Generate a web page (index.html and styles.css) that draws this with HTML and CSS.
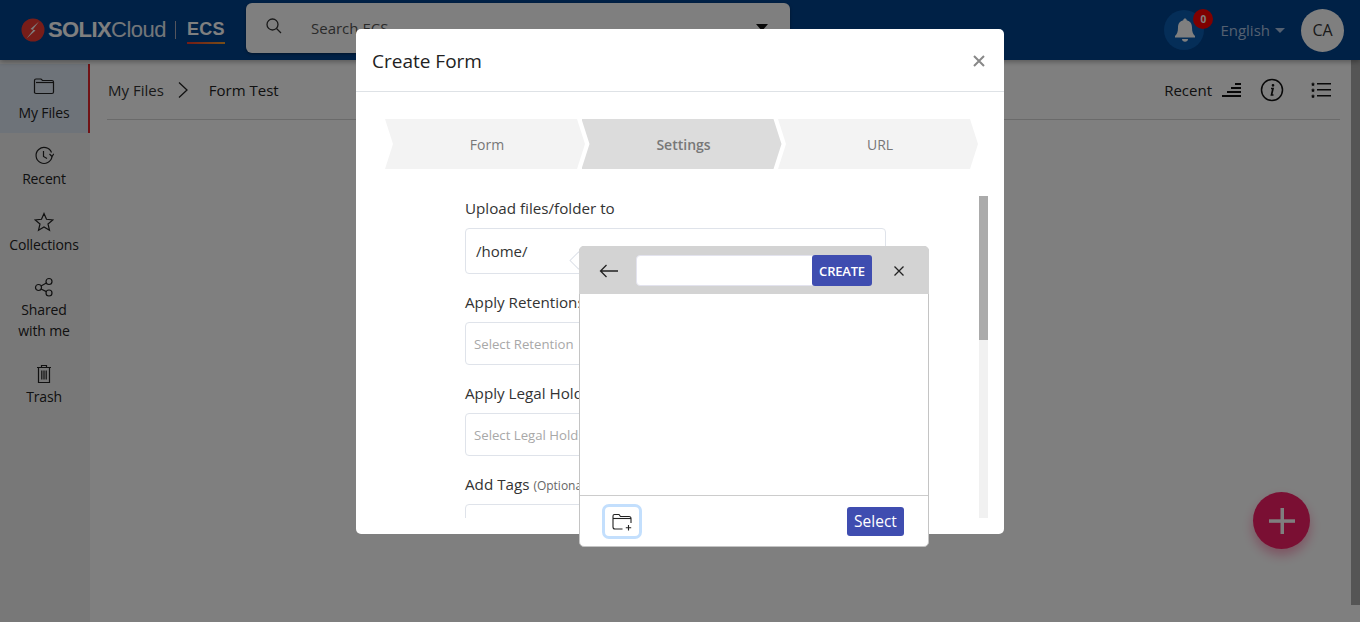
FILE: index.html
```html
<!DOCTYPE html>
<html lang="en">
<head>
    <meta charset="UTF-8">
    <title>My Files</title>
    <link rel="stylesheet" href="styles.css">
</head>
<body>
    <header class="topbar">
        <div class="logo">
            <svg class="logo-mark" width="24" height="24" viewBox="0 0 24 24">
                <circle cx="12" cy="12" r="11.5" fill="#ef3b32"/>
                <path d="M18 3.500 L9.500 11 L12.300 12 L5.500 20.500 L14.500 12.500 L11.800 11.500 Z" fill="#fff"/>
            </svg>
            <span class="logo-solix">SOLIX</span><span class="logo-cloud">Cloud</span>
            <span class="logo-sep"></span>
            <span class="logo-ecs">ECS</span>
        </div>
        <div class="search">
            <svg width="18" height="18" viewBox="0 0 18 18" fill="none" stroke="#333" stroke-width="1.3">
                <circle cx="7.5" cy="7.5" r="5.5"/>
                <path d="M11.5 11.5 L16 16"/>
            </svg>
            <span class="search-text">Search ECS</span>
            <span class="search-caret"></span>
        </div>
        <div class="top-right">
            <div class="bell">
                <svg width="24" height="26" viewBox="0 0 24 26" fill="#fff">
                    <path d="M12 1.5 c1 0 1.7 .7 1.7 1.7 c3.6 .8 5.3 3.6 5.3 7.3 c0 4.5 1 6.5 3 8.5 v1.5 H2 V19 c2 -2 3 -4 3 -8.5 c0 -3.700 1.700 -6.500 5.300 -7.300 C10.300 2.200 11 1.500 12 1.500 Z"/>
                    <path d="M9 22 h6 c0 1.700 -1.300 2.700 -3 2.700 s-3 -1 -3 -2.700 Z"/>
                </svg>
                <span class="bell-count">0</span>
            </div>
            <span class="lang">English</span>
            <span class="lang-caret"></span>
            <span class="avatar">CA</span>
        </div>
    </header>

    <div class="main">
        <nav class="sidebar">
            <a class="side-item active">
                <svg width="22" height="18" viewBox="0 0 22 18" fill="none" stroke="#222" stroke-width="1.200">
                    <path d="M1.500 16 V3.500 Q1.500 2 3 2 H8 L9.500 3.500 H19 Q20.500 3.500 20.500 5 V15 Q20.500 16.500 19 16.500 H3 Q1.500 16.500 1.500 15"/>
                    <path d="M3 5.500 H20"/>
                </svg>
                <span>My Files</span>
            </a>
            <a class="side-item">
                <svg width="20" height="20" viewBox="0 0 20 20" fill="none" stroke="#222" stroke-width="1.200">
                    <path d="M17.500 6.500 A8 8 0 1 0 18 10.500"/>
                    <path d="M15.500 8 L18 10.500 L19.800 7.800"/>
                    <path d="M9.500 5 V10.500 L13 12.500"/>
                </svg>
                <span>Recent</span>
            </a>
            <a class="side-item">
                <svg width="20" height="20" viewBox="0 0 20 20" fill="none" stroke="#222" stroke-width="1.200">
                    <path d="M10 1.500 L12.500 7.300 L18.800 7.900 L14 12 L15.500 18.300 L10 15 L4.500 18.300 L6 12 L1.200 7.900 L7.500 7.300 Z"/>
                </svg>
                <span>Collections</span>
            </a>
            <a class="side-item">
                <svg width="20" height="20" viewBox="0 0 20 20" fill="none" stroke="#222" stroke-width="1.200">
                    <circle cx="4.500" cy="10.500" r="3"/>
                    <circle cx="15" cy="4.500" r="3"/>
                    <circle cx="15" cy="16" r="3"/>
                    <path d="M7 9 L12.400 6 M7 12 L12.400 14.600"/>
                </svg>
                <span>Shared<br>with me</span>
            </a>
            <a class="side-item">
                <svg width="18" height="20" viewBox="0 0 18 20" fill="none" stroke="#222" stroke-width="1.200">
                    <path d="M2 3.500 H16 M6.500 3.500 V1.500 H11.500 V3.500"/>
                    <path d="M3.500 3.500 V18.500 H14.500 V3.500"/>
                    <path d="M6.800 6.500 V15.500 M9 6.500 V15.500 M11.200 6.500 V15.500"/>
                </svg>
                <span>Trash</span>
            </a>
        </nav>

        <section class="content">
            <div class="crumbs">
                <span class="crumb">My Files</span>
                <svg width="12" height="18" viewBox="0 0 12 18" fill="none" stroke="#222" stroke-width="1.300">
                    <path d="M2 1.500 L10 9 L2 16.500"/>
                </svg>
                <span class="crumb-current">Form Test</span>
                <div class="tools">
                    <span class="crumb-current">Recent</span>
                    <svg class="tool-sort" width="19" height="14" viewBox="0 0 19 14" fill="#111">
                        <rect x="13" y="0" width="6" height="2"/>
                        <rect x="9" y="4" width="10" height="2"/>
                        <rect x="5" y="8" width="14" height="2"/>
                        <rect x="0" y="12" width="19" height="2"/>
                    </svg>
                    <svg class="tool-info" width="24" height="24" viewBox="0 0 24 24" fill="none" stroke="#111" stroke-width="1.500">
                        <circle cx="12" cy="12" r="10.500"/>
                        <path d="M11 10.500 H13 L11.500 17 H13.500" stroke-width="1.700"/>
                        <circle cx="13" cy="7.300" r=".6" fill="#111"/>
                    </svg>
                    <svg class="tool-list" width="20" height="16" viewBox="0 0 20 16" fill="#111">
                        <path d="M2 0 l.7 1.500 1.300 .2 -1 1 .3 1.500 -1.300 -.7 -1.300 .7 .3 -1.500 -1 -1 1.300 -.2 Z"/>
                        <path d="M2 6 l.7 1.500 1.300 .2 -1 1 .3 1.500 -1.300 -.7 -1.300 .7 .3 -1.500 -1 -1 1.300 -.2 Z"/>
                        <path d="M2 12 l.7 1.500 1.300 .2 -1 1 .3 1.500 -1.300 -.7 -1.300 .7 .3 -1.500 -1 -1 1.300 -.2 Z"/>
                        <rect x="6" y="1" width="14" height="1.500"/>
                        <rect x="6" y="7" width="14" height="1.500"/>
                        <rect x="6" y="13" width="14" height="1.500"/>
                    </svg>
                </div>
            </div>
            <span class="fab">
                <svg width="26" height="26" viewBox="0 0 26 26" fill="#fff">
                    <rect x="11.500" y="0" width="3.500" height="26"/>
                    <rect x="0" y="11.300" width="26" height="3.500"/>
                </svg>
            </span>
        </section>

        <div class="page-scroll"></div>
    </div>

    <div class="backdrop"></div>

    <div class="overlay">
        <div class="modal">
            <div class="modal-head">
                <h2>Create Form</h2>
                <svg width="12" height="12" viewBox="0 0 12 12" stroke="#888" stroke-width="2">
                    <path d="M1 1 L11 11 M11 1 L1 11"/>
                </svg>
            </div>
            <div class="modal-body">
                <div class="modal-scroll">
                    <div class="steps">
                        <div class="step">Form</div>
                        <div class="step current">Settings</div>
                        <div class="step">URL</div>
                    </div>
                    <form class="form">
                        <label>Upload files/folder to</label>
                        <div class="field path">/home/</div>
                        <label>Apply Retentions</label>
                        <div class="field">Select Retention</div>
                        <label>Apply Legal Holds</label>
                        <div class="field">Select Legal Holds</div>
                        <label>Add Tags <small>(Optional)</small></label>
                        <div class="field"></div>
                    </form>
                </div>
                <div class="modal-bar"><div class="modal-thumb"></div></div>
            </div>

            <div class="picker">
                <span class="picker-arrow"></span>
                <div class="picker-head">
                    <svg class="picker-back" width="20" height="14" viewBox="0 0 20 14" fill="none" stroke="#222" stroke-width="1.300">
                        <path d="M19 7 H1.500 M7.500 1 L1.500 7 L7.500 13"/>
                    </svg>
                    <div class="picker-input">
                        <span class="picker-create">CREATE</span>
                    </div>
                    <svg class="picker-close" width="10" height="10" viewBox="0 0 10 10" stroke="#222" stroke-width="1.300">
                        <path d="M.5 .5 L9.500 9.500 M9.500 .5 L.5 9.500"/>
                    </svg>
                </div>
                <div class="picker-list"></div>
                <div class="picker-foot">
                    <span class="new-folder">
                        <svg width="21" height="18" viewBox="0 0 21 18" fill="none" stroke="#222" stroke-width="1.100">
                            <path d="M10.500 16 H3 Q1 16 1 14 V3 Q1 1.500 2.500 1.500 H7 L8.500 3.500 H17 Q19 3.500 19 5.500 V10"/>
                            <path d="M1 5.500 H19"/>
                            <path d="M16.500 12 V17.500 M13.800 14.800 H19.200"/>
                        </svg>
                    </span>
                    <span class="picker-select">Select</span>
                </div>
            </div>
        </div>
    </div>
</body>
</html>
```

FILE: styles.css
```css
/* General Style */
* {
    box-sizing: border-box;
}

body {
    font-family: 'Open Sans', 'Noto Sans', sans-serif;
    background-color: #fff;
    color: #222;
    margin: 0;
    height: 622px;
    overflow: hidden;
    position: relative;
}

/* Header */
.topbar {
    height: 60px;
    background-color: #00428c;
    display: flex;
    align-items: center;
    padding-left: 21px;
    box-shadow: 0 2px 5px rgba(0, 0, 0, 0.3);
    position: relative;
}

.logo {
    width: 225px;
    display: flex;
    align-items: center;
    height: 60px;
    color: #fff;
    font-family: 'Liberation Sans', sans-serif;
    font-size: 22px;
    padding-bottom: 1px;
}

.logo-mark {
    margin-right: 3px;
}

.logo-solix {
    font-weight: bold;
    letter-spacing: -0.6px;
}

.logo-cloud {
    letter-spacing: -0.5px;
    opacity: 0.9;
}

.logo-sep {
    width: 1px;
    height: 18px;
    background-color: #aab;
    margin: 0 11px 0 9px;
}

.logo-ecs {
    font-weight: bold;
    font-size: 18px;
    letter-spacing: 0.3px;
    padding-bottom: 2px;
    margin-top: 4px;
    border-bottom: 2px solid;
    border-image: linear-gradient(90deg, #e8352c, #f0a030) 1;
}

.search {
    width: 544px;
    height: 50px;
    margin-top: -5px;
    background-color: #fff;
    border-radius: 6px;
    display: flex;
    align-items: center;
    padding: 0 22px 0 19px;
    box-shadow: 0 1px 3px rgba(0, 0, 0, 0.4);
}

.search svg {
    margin-top: -4px;
}

.search-text {
    margin-left: 28px;
    font-size: 15px;
    color: #555;
    flex: 1;
}

.search-caret {
    border: 6px solid transparent;
    border-top: 7px solid #111;
    border-bottom: 0;
}

.top-right {
    margin-left: auto;
    display: flex;
    align-items: center;
    padding-right: 16px;
}

.bell {
    width: 40px;
    height: 40px;
    border-radius: 50%;
    background-color: #0a5cb0;
    display: flex;
    align-items: center;
    justify-content: center;
    position: relative;
}

.bell svg {
    margin-left: 1px;
}

.bell-count {
    position: absolute;
    top: -1px;
    left: 29px;
    width: 20px;
    height: 20px;
    border-radius: 50%;
    background-color: #ff0000;
    color: #fff;
    font-size: 10px;
    font-weight: bold;
    line-height: 20px;
    text-align: center;
}

.lang {
    margin-left: 16px;
    font-size: 15px;
    color: #a8c0e0;
}

.lang-caret {
    margin-left: 5px;
    border: 5px solid transparent;
    border-top: 5px solid #a8c0e0;
    border-bottom: 0;
}

.avatar {
    width: 43px;
    height: 43px;
    margin-left: 16px;
    border-radius: 50%;
    background-color: #fff;
    color: #333;
    font-size: 16px;
    line-height: 43px;
    text-align: center;
}

/* Page */
.main {
    display: flex;
    height: 562px;
}

.sidebar {
    width: 90px;
    background-color: #f1f1f1;
    padding-top: 4px;
    font-size: 14px;
    letter-spacing: -0.15px;
    flex-shrink: 0;
}

.side-item {
    display: flex;
    flex-direction: column;
    align-items: center;
    height: 66px;
    padding: 13px 2px 0 0;
    line-height: 21px;
    text-align: center;
    color: #222;
}

.side-item svg {
    margin-bottom: 2px;
}

.side-item.active {
    height: 69px;
    padding-right: 0;
    background-color: #dde6f2;
    border-right: 2px solid #e0242a;
}

.side-item.active svg {
    margin-bottom: 7px;
}

.side-item:nth-child(3) {
    height: 65px;
}

.side-item:nth-child(4) {
    height: 87px;
}

.content {
    flex: 1;
    padding: 0 11px 0 17px;
    position: relative;
}

.crumbs {
    height: 60px;
    display: flex;
    align-items: center;
    border-bottom: 1px solid #d5d5d5;
    font-size: 15px;
}

.crumb {
    color: #333;
    margin-left: 1px;
}

.crumbs > svg {
    margin: 0 20px 0 13px;
}

.crumb-current {
    color: #222;
}

.tools {
    margin-left: auto;
    padding-right: 9px;
    display: flex;
    align-items: center;
}

.tool-sort {
    margin-left: 10px;
}

.tool-info {
    margin-left: 19px;
}

.tool-list {
    margin: 0 0 0 27px;
}

.fab {
    position: absolute;
    top: 432px;
    left: 1163px;
    width: 57px;
    height: 57px;
    border-radius: 50%;
    background-color: #f41f66;
    display: flex;
    align-items: center;
    justify-content: center;
    box-shadow: 0 6px 12px rgba(244, 31, 102, 0.4);
}

.page-scroll {
    width: 9px;
    height: 545px;
    background-color: #aaa;
    flex-shrink: 0;
}

/* Modal */
.backdrop {
    position: absolute;
    inset: 0;
    background-color: rgba(0, 0, 0, 0.5);
}

.overlay {
    position: absolute;
    inset: 0;
    display: flex;
    justify-content: center;
    padding-top: 29px;
}

.modal {
    width: 648px;
    height: 505px;
    background-color: #fff;
    border-radius: 5px;
    position: relative;
}

.modal-head {
    height: 63px;
    padding: 1px 19px 0 16px;
    display: flex;
    align-items: center;
    justify-content: space-between;
    border-bottom: 1px solid #dee2e6;
}

.modal-head h2 {
    margin: 0;
    font-size: 19px;
    font-weight: 500;
    color: #222;
}

.modal-body {
    height: 426px;
    display: flex;
    overflow: hidden;
}

.modal-scroll {
    width: 623px;
    padding: 27px 0 0 29px;
}

.steps {
    display: flex;
    width: 593px;
    height: 50px;
    margin-bottom: 28px;
}

.step {
    width: 200px;
    margin-right: -3.5px;
    padding-left: 4px;
    background-color: #f3f3f3;
    color: #777;
    font-size: 14px;
    line-height: 51px;
    text-align: center;
    clip-path: polygon(0 0, 192px 0, 100% 50%, 192px 100%, 0 100%, 8px 50%);
    flex-shrink: 0;
}

.step.current {
    background-color: #dcdcdc;
    font-weight: 600;
}

.form {
    width: 421px;
    margin-left: 80px;
}

.form label {
    display: block;
    font-size: 15.2px;
    line-height: 22px;
    color: #333;
    margin-bottom: 9px;
}

.form small {
    font-size: 12px;
    line-height: 1;
    color: #666;
}

.field {
    height: 43px;
    border: 1px solid #dfe3ea;
    border-radius: 4px;
    padding-left: 8px;
    font-size: 13.2px;
    line-height: 42px;
    color: #a8a8a8;
    margin-bottom: 17px;
}

.field.path {
    height: 46px;
    padding-left: 10px;
    font-size: 15px;
    line-height: 44px;
    color: #333;
}

.modal-bar {
    width: 9px;
    height: 322px;
    margin-top: 104px;
    background-color: #f1f1f1;
}

.modal-thumb {
    height: 144px;
    background-color: #ababab;
}

/* Folder picker */
.picker {
    position: absolute;
    top: 217px;
    left: 223px;
    width: 350px;
    height: 301px;
    background-color: #fff;
    border: 1px solid #c4c4c4;
    border-radius: 5px;
    display: flex;
    flex-direction: column;
}

.picker-arrow {
    position: absolute;
    top: 7px;
    left: -8px;
    width: 13px;
    height: 13px;
    background-color: #fff;
    border: 1px solid #dfe3ea;
    transform: rotate(45deg);
}

.picker-head {
    height: 48px;
    margin: -1px -1px 0;
    background-color: #d3d3d3;
    border-radius: 5px 5px 0 0;
    display: flex;
    align-items: center;
    padding: 0 0 0 20px;
    position: relative;
}

.picker-back,
.picker-close {
    margin-top: 1px;
}

.picker-input {
    width: 236px;
    height: 31px;
    margin-left: 17px;
    background-color: #fff;
    border: 1px solid #e3e3ee;
    border-radius: 4px;
    display: flex;
    justify-content: flex-end;
}

.picker-create {
    width: 60px;
    height: 31px;
    margin: -1px;
    background-color: #3f4db0;
    border-radius: 3px;
    color: #fff;
    font-size: 13px;
    font-weight: 600;
    letter-spacing: -0.2px;
    line-height: 32px;
    text-align: center;
}

.picker-close {
    margin-left: 22px;
}

.picker-list {
    height: 202px;
    border-bottom: 1px solid #ccc;
}

.picker-foot {
    flex: 1;
    display: flex;
    align-items: center;
    justify-content: space-between;
    padding: 1px 24px 0 22px;
}

.new-folder {
    width: 40px;
    height: 35px;
    border: 3px solid #c3dffd;
    border-radius: 7px;
    display: flex;
    align-items: center;
    justify-content: center;
}

.picker-select {
    width: 57px;
    height: 29px;
    background-color: #3f4db0;
    border-radius: 3px;
    color: #fff;
    font-size: 15.5px;
    line-height: 29px;
    text-align: center;
}
```
